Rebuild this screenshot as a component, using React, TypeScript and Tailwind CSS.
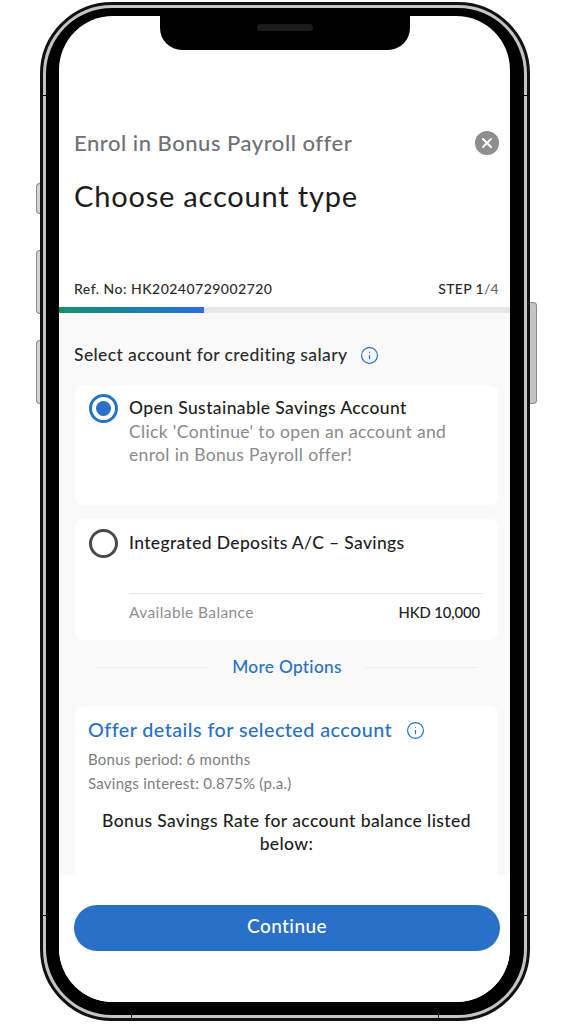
import { Info, X } from "lucide-react";

const font = { fontFamily: "Lato, 'Liberation Sans', sans-serif" };

function Radio({ selected }: { selected?: boolean }) {
  if (selected) {
    return (
      <span className="flex h-[29px] w-[29px] shrink-0 items-center justify-center rounded-full border-[3px] border-[#2870c8]">
        <span className="h-[15px] w-[15px] rounded-full bg-[#2870c8]" />
      </span>
    );
  }
  return <span className="h-[29px] w-[29px] shrink-0 rounded-full border-[3px] border-[#4a4a4a]" />;
}

function PhoneFrame({ children }: { children: React.ReactNode }) {
  return (
    <div className="relative h-[1019px] w-[490px]">
      {/* side buttons */}
      <div className="absolute left-[-4px] top-[181px] h-[31px] w-[4px] rounded-l-sm border border-r-0 border-[#8a8a8a] bg-[#d4d4d4]" />
      <div className="absolute left-[-4px] top-[248px] h-[64px] w-[4px] rounded-l-sm border border-r-0 border-[#8a8a8a] bg-[#d4d4d4]" />
      <div className="absolute left-[-4px] top-[338px] h-[64px] w-[4px] rounded-l-sm border border-r-0 border-[#8a8a8a] bg-[#d4d4d4]" />
      <div className="absolute right-[-7px] top-[300px] h-[102px] w-[7px] rounded-r-sm border border-l-0 border-[#8a8a8a] bg-[#c4c4c4]" />
      <div className="h-full w-full rounded-[72px] border-[3px] border-[#111] bg-[#c4c4c4] p-[3px]">
        <div className="h-full w-full rounded-[66px] bg-black pb-[13px] pl-[13px] pr-[14px] pt-[8px]">
          <div className="relative h-full w-full overflow-hidden rounded-[54px] bg-white">
            {/* notch */}
            <div className="absolute left-[101px] top-0 flex h-[34px] w-[250px] justify-center rounded-b-[22px] bg-black pt-[8px]">
              <div className="h-[7px] w-[56px] rounded-full bg-[#1c1c1c]" />
            </div>
            {children}
          </div>
        </div>
      </div>
      {/* antenna lines */}
      <div className="absolute left-[3px] top-[93px] h-px w-[4px] bg-black" />
      <div className="absolute right-[3px] top-[93px] h-px w-[4px] bg-black" />
      <div className="absolute left-[3px] top-[913px] h-px w-[4px] bg-black" />
      <div className="absolute right-[3px] top-[913px] h-px w-[4px] bg-black" />
      <div className="absolute bottom-[3px] left-[91px] h-[4px] w-px bg-black" />
      <div className="absolute bottom-[3px] left-[398px] h-[4px] w-px bg-black" />
    </div>
  );
}

export default function App() {
  return (
    <div className="h-[1024px] w-[574px] overflow-hidden bg-white pl-[40px] pt-[2px]" style={font}>
      <PhoneFrame>
        <div className="flex h-full flex-col">
          {/* header */}
          <div className="flex h-[291px] shrink-0 flex-col pl-[15px] pr-[11px]">
            <div className="mt-[111px] flex h-[32px] items-center justify-between">
              <span className="-mt-[2px] text-[22px] font-medium tracking-[0.52px] text-[#6e7175]">Enrol in Bonus Payroll offer</span>
              <span className="flex h-[24px] w-[24px] items-center justify-center rounded-full bg-[#8e8e8e]">
                <X size={16} strokeWidth={3} color="white" />
              </span>
            </div>
            <h1 className="mt-[17px] text-[29px] leading-[40px] tracking-[0.8px] text-[#1c1c1c]">Choose account type</h1>
            <div className="mt-[62px] flex items-center justify-between text-[14px] font-medium text-[#2b2b2b]">
              <span className="tracking-[0.48px]">Ref. No: HK20240729002720</span>
              <span className="tracking-[0.3px]">STEP 1<span className="text-[#666]">/4</span></span>
            </div>
          </div>

          {/* progress */}
          <div className="h-[6px] shrink-0 bg-[#e3e7eb]">
            <div className="h-full w-[145px] bg-gradient-to-r from-[#17906e] to-[#2f6be0]" />
          </div>

          {/* scroll area */}
          <div className="h-[562px] shrink-0 overflow-hidden bg-[#f9f9fa] pl-[15px] pr-[12px]">
            <div className="mt-[30px] flex h-[24px] items-center gap-[12px] text-[17.5px] font-medium tracking-[0.4px] text-[#2b2b2b]">
              Select account for crediting salary
              <Info size={19} strokeWidth={1.5} color="#2870c8" />
            </div>

            <div className="ml-px mt-[18px] h-[120px] rounded-[8px] bg-white pl-[14px] pr-[15px] pt-[9px]">
              <div className="flex gap-[11px]">
                <Radio selected />
                <div className="pt-[2px]">
                  <div className="text-[17.5px] font-medium leading-[24px] tracking-[0.4px] text-[#1e1e1e]">Open Sustainable Savings Account</div>
                  <div className="text-[17.5px] leading-[23px] tracking-[0.35px] text-[#8a8a8a]">
                    Click 'Continue' to open an account and
                    <br />
                    enrol in Bonus Payroll offer!
                  </div>
                </div>
              </div>
            </div>

            <div className="ml-px mt-[14px] h-[121px] rounded-[8px] bg-white pl-[14px] pr-[15px] pt-[10px]">
              <div className="flex items-center gap-[11px]">
                <Radio />
                <div className="text-[17.5px] font-medium tracking-[0.35px] text-[#1e1e1e]">Integrated Deposits A/C – Savings</div>
              </div>
              <div className="ml-[40px] mt-[35px] border-t border-[#e8e8e8] pt-[7px]">
                <div className="flex items-center justify-between pr-[3px]">
                  <span className="text-[15.5px] tracking-[0.4px] text-[#8f8f8f]">Available Balance</span>
                  <span className="-mt-[2px] text-[14.8px] font-medium tracking-[-0.1px] text-[#222]">HKD 10,000</span>
                </div>
              </div>
            </div>

            <div className="ml-px mt-[15px] flex h-[24px] items-center pl-[21px] pr-[20px]">
              <div className="h-px flex-1 bg-[#ececec]" />
              <span className="w-[156px] text-center text-[17.3px] font-medium tracking-[0.3px] text-[#2870c8]">More Options</span>
              <div className="h-px flex-1 bg-[#ececec]" />
            </div>

            <div className="ml-px mt-[27px] h-[200px] rounded-[8px] bg-white px-[13px] pt-[10px]">
              <div className="flex h-[28px] items-center gap-[14px] text-[19.8px] font-medium tracking-[0.43px] text-[#2870c8]">
                Offer details for selected account
                <Info size={19} strokeWidth={1.5} color="#2870c8" />
              </div>
              <div className="mt-[3px] text-[15px] leading-[24px] tracking-[0.25px] text-[#7d7d7d]">
                <div>Bonus period: 6 months</div>
                <div>Savings interest: 0.875% (p.a.)</div>
              </div>
              <div className="mt-[14px] text-center text-[17.5px] font-medium leading-[23px] tracking-[0.4px] text-[#1e1e1e]">
                Bonus Savings Rate for account balance listed below:
              </div>
            </div>
          </div>

          {/* footer */}
          <div className="flex-1 bg-white pl-[15px] pr-[10px] pt-[30px]">
            <button className="h-[46px] w-full rounded-full bg-[#2870c8] pb-[3px] text-[19px] font-medium tracking-[0.4px] text-white">Continue</button>
          </div>
        </div>
      </PhoneFrame>
    </div>
  );
}
